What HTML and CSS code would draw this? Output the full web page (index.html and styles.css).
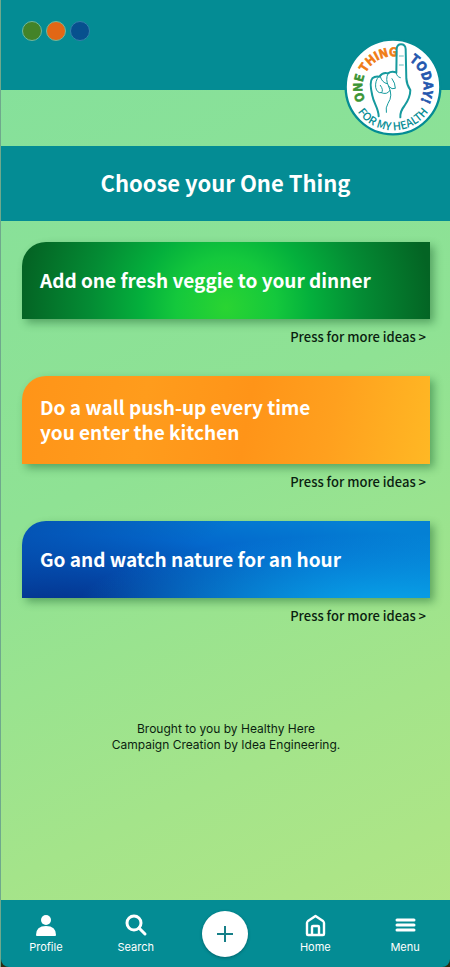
FILE: index.html
```html
<!DOCTYPE html>
<html lang="en">
<head>
  <meta charset="UTF-8">
  <meta name="viewport" content="width=device-width, initial-scale=1">
  <title>One Thing Today</title>
  <link rel="stylesheet" href="styles.css">
</head>
<body>
  <div class="app">
    <header class="header">
      <span class="dot dot-green"></span>
      <span class="dot dot-orange"></span>
      <span class="dot dot-blue"></span>
      <svg class="logo" viewBox="0 0 300 300" role="img" aria-label="One Thing Today! For my health">
        <defs>
          <path id="arc-top" d="M58 150 a92 92 0 1 1 184 0 a92 92 0 0 1 -184 0" transform="rotate(-26 150 150)"/>
          <path id="arc-today" d="M150 58 a92 92 0 0 1 0 184" transform="rotate(31 150 150)"/>
          <path id="arc-bottom" d="M20 150 a130 130 0 0 0 260 0"/>
        </defs>
        <circle cx="150" cy="150" r="142" fill="#fff" stroke="#048c94" stroke-width="7"/>
        <text class="logo-bold"><textPath href="#arc-top"><tspan class="logo-green">ONE</tspan> <tspan class="logo-orange">THING</tspan></textPath></text>
        <text class="logo-bold logo-blue"><textPath href="#arc-today">TODAY!</textPath></text>
        <text class="logo-light" fill="#048c94" text-anchor="middle"><textPath href="#arc-bottom" startOffset="50%">FOR MY HEALTH</textPath></text>
        <g fill="none" stroke="#169a9e" stroke-width="6" stroke-linecap="round" stroke-linejoin="round">
          <path d="M107 238 C107 214 92 199 88 176 C83 155 80 132 88 124 Q97 116 109 119 Q120 104 135 109 Q147 100 160 107 L161 36 Q162 22 174 22 Q187 22 188 36 L190 125 Q191 143 202 159 Q202 182 184 207 Q171 223 172 241"/>
          <path stroke-width="3" d="M107 119 Q96 131 98 151 Q102 169 115 167 Q123 160 112 145 M112 119 Q117 137 132 140 M135 110 Q126 127 137 148 Q147 159 157 154 Q157 138 147 125 M115 167 Q132 175 141 160 M160 107 Q160 119 172 122 M137 148 Q151 176 135 199 Q127 212 130 226"/>
          <path stroke-width="2" d="M169 57 H181 M169 84 H181"/>
        </g>
      </svg>
    </header>

    <h1 class="title">Choose your One Thing</h1>

    <main class="ideas">
      <section class="idea">
        <button class="card card-green" type="button">Add one fresh veggie to your dinner</button>
        <a class="more" href="#">Press for more ideas &gt;</a>
      </section>
      <section class="idea">
        <button class="card card-orange" type="button">Do a wall push-up every time<br>you enter the kitchen</button>
        <a class="more" href="#">Press for more ideas &gt;</a>
      </section>
      <section class="idea">
        <button class="card card-blue" type="button">Go and watch nature for an hour</button>
        <a class="more" href="#">Press for more ideas &gt;</a>
      </section>

      <p class="credits">Brought to you by Healthy Here<br>Campaign Creation by Idea Engineering.</p>
    </main>

    <div class="nav-wrap">
      <nav class="nav">
        <a class="nav-item" href="#">
          <svg class="icon" viewBox="0 0 24 24" fill="#fff">
            <circle cx="12" cy="7" r="5"/>
            <path d="M2 22 Q2 13 12 13 Q22 13 22 22 Q22 23 21 23 H3 Q2 23 2 22Z"/>
          </svg>
          Profile
        </a>
        <a class="nav-item" href="#">
          <svg class="icon" viewBox="0 0 24 24" fill="none" stroke="#fff" stroke-width="3" stroke-linecap="round">
            <circle cx="10" cy="10" r="7"/>
            <path d="M15 15 L21 21"/>
          </svg>
          Search
        </a>
        <div class="nav-item">
          <button class="add" type="button" aria-label="Add">
            <svg class="plus" viewBox="0 0 18 18" fill="none" stroke="#167f88" stroke-width="2">
              <path d="M9 1 V17 M1 9 H17"/>
            </svg>
          </button>
        </div>
        <a class="nav-item" href="#">
          <svg class="icon" viewBox="0 0 24 24" fill="none" stroke="#fff" stroke-width="2.400" stroke-linejoin="round">
            <path d="M4 10 Q4 9 5 8 L12.500 3 L20 8 Q21 9 21 10 V21 Q21 22 20 22 H5 Q4 22 4 21Z"/>
            <path d="M9 22 V14 Q9 13 10 13 H15 Q16 13 16 14 V22"/>
          </svg>
          Home
        </a>
        <a class="nav-item" href="#">
          <svg class="icon" viewBox="0 0 24 24" fill="none" stroke="#fff" stroke-width="3" stroke-linecap="round">
            <path d="M4 7 H21 M4 12 H21 M4 17 H21"/>
          </svg>
          Menu
        </a>
      </nav>
    </div>
  </div>
</body>
</html>
```

FILE: styles.css
```css
* {
  box-sizing: border-box;
}
body {
  margin: 0;
  font-family: "Noto Sans CJK SC", "Open Sans", sans-serif;
  color: #0b1f10;
}
.app {
  display: flex;
  flex-direction: column;
  min-height: 100vh;
  border-left: 1px solid #6fa98c;
  background: linear-gradient(155deg, #84e09c 0%, #8fe294 45%, #a4e48a 75%, #b4e684 100%);
}

/* top bar */
.header {
  position: relative;
  display: flex;
  gap: 4px;
  height: 90px;
  padding: 21px;
  background: #048c94;
}
.dot {
  width: 20px;
  height: 20px;
  border: 1px solid #70b89c;
  border-radius: 50%;
}
.dot-green {
  background: #438328;
}
.dot-orange {
  background: #e26715;
}
.dot-blue {
  background: #07508e;
  border-color: #3480ac;
}
.logo {
  position: absolute;
  top: 37px;
  right: 7px;
  width: 100px;
  height: 100px;
}
.logo-bold {
  font-size: 36px;
  font-weight: 700;
  stroke-width: 2px;
}
.logo-green {
  fill: #3c9434;
  stroke: #3c9434;
}
.logo-orange {
  fill: #f07c14;
  stroke: #f07c14;
}
.logo-blue {
  fill: #2457ae;
  stroke: #2457ae;
  font-size: 38px;
}
.logo-light {
  font-size: 33px;
  font-weight: 500;
}

.title {
  margin: 56px 0 0;
  padding: 19px 20px 21px;
  background: #048c94;
  color: #fff;
  font-size: 22px;
  line-height: 35px;
  font-weight: 700;
  text-align: center;
}

/* idea cards */
.ideas {
  flex: 1;
  padding: 21px 20px 20px 21px;
}
.idea {
  display: flex;
  flex-direction: column;
  margin-bottom: 28px;
}
.card {
  min-height: 77px;
  padding: 18px 18px 20px;
  border: none;
  border-radius: 24px 0 0 0;
  box-shadow: 4px 4px 8px rgba(20, 90, 40, 0.45);
  color: #fff;
  font-family: inherit;
  font-size: 19px;
  line-height: 25px;
  font-weight: 700;
  text-align: left;
  cursor: pointer;
}
.card-green {
  background: radial-gradient(circle at 50% 85%, #2ad432 0, #14c83c 50px, #04b03c 85px, #048c34 135px, #046424 205px);
}
.card-orange {
  background: linear-gradient(100deg, #ff9418 0%, #ff9c1c 30%, #ff9418 55%, #ffa01e 75%, #ffb824 100%);
}
.card-blue {
  background:
    radial-gradient(ellipse at 90% 110%, #08a4e8 0%, rgba(8, 150, 224, 0) 60%),
    linear-gradient(150deg, rgba(4, 72, 168, 0.7) 0%, rgba(4, 100, 200, 0) 40%),
    radial-gradient(ellipse at 0% 110%, #042c84 0%, #0448a8 30%, #0468cc 60%, #0480d4 90%);
}
.more {
  align-self: flex-end;
  margin-top: 7px;
  padding-right: 4px;
  color: #0b1f10;
  font-size: 13px;
  line-height: 22px;
  font-weight: 500;
  text-decoration: none;
}
.credits {
  margin: 94px 0 0;
  font-family: Inter, sans-serif;
  font-size: 12px;
  line-height: 16px;
  text-align: center;
}

/* bottom navigation */
.nav-wrap {
  background: #302c10;
}
.nav {
  display: grid;
  grid-template-columns: repeat(5, 1fr);
  height: 67px;
  border-radius: 0 0 8px 8px;
  background: #048c94;
}
.nav-item {
  display: flex;
  flex-direction: column;
  align-items: center;
  justify-content: center;
  gap: 3px;
  color: #fff;
  font-family: Inter, sans-serif;
  font-size: 11px;
  line-height: 14px;
  text-decoration: none;
}
.icon {
  width: 24px;
  height: 24px;
}
.add {
  display: flex;
  align-items: center;
  justify-content: center;
  width: 46px;
  height: 46px;
  padding: 0;
  border: none;
  border-radius: 50%;
  background: #fff;
  box-shadow: 0 1px 3px rgba(0, 40, 50, 0.4);
  cursor: pointer;
}
.plus {
  width: 18px;
  height: 18px;
}
```
